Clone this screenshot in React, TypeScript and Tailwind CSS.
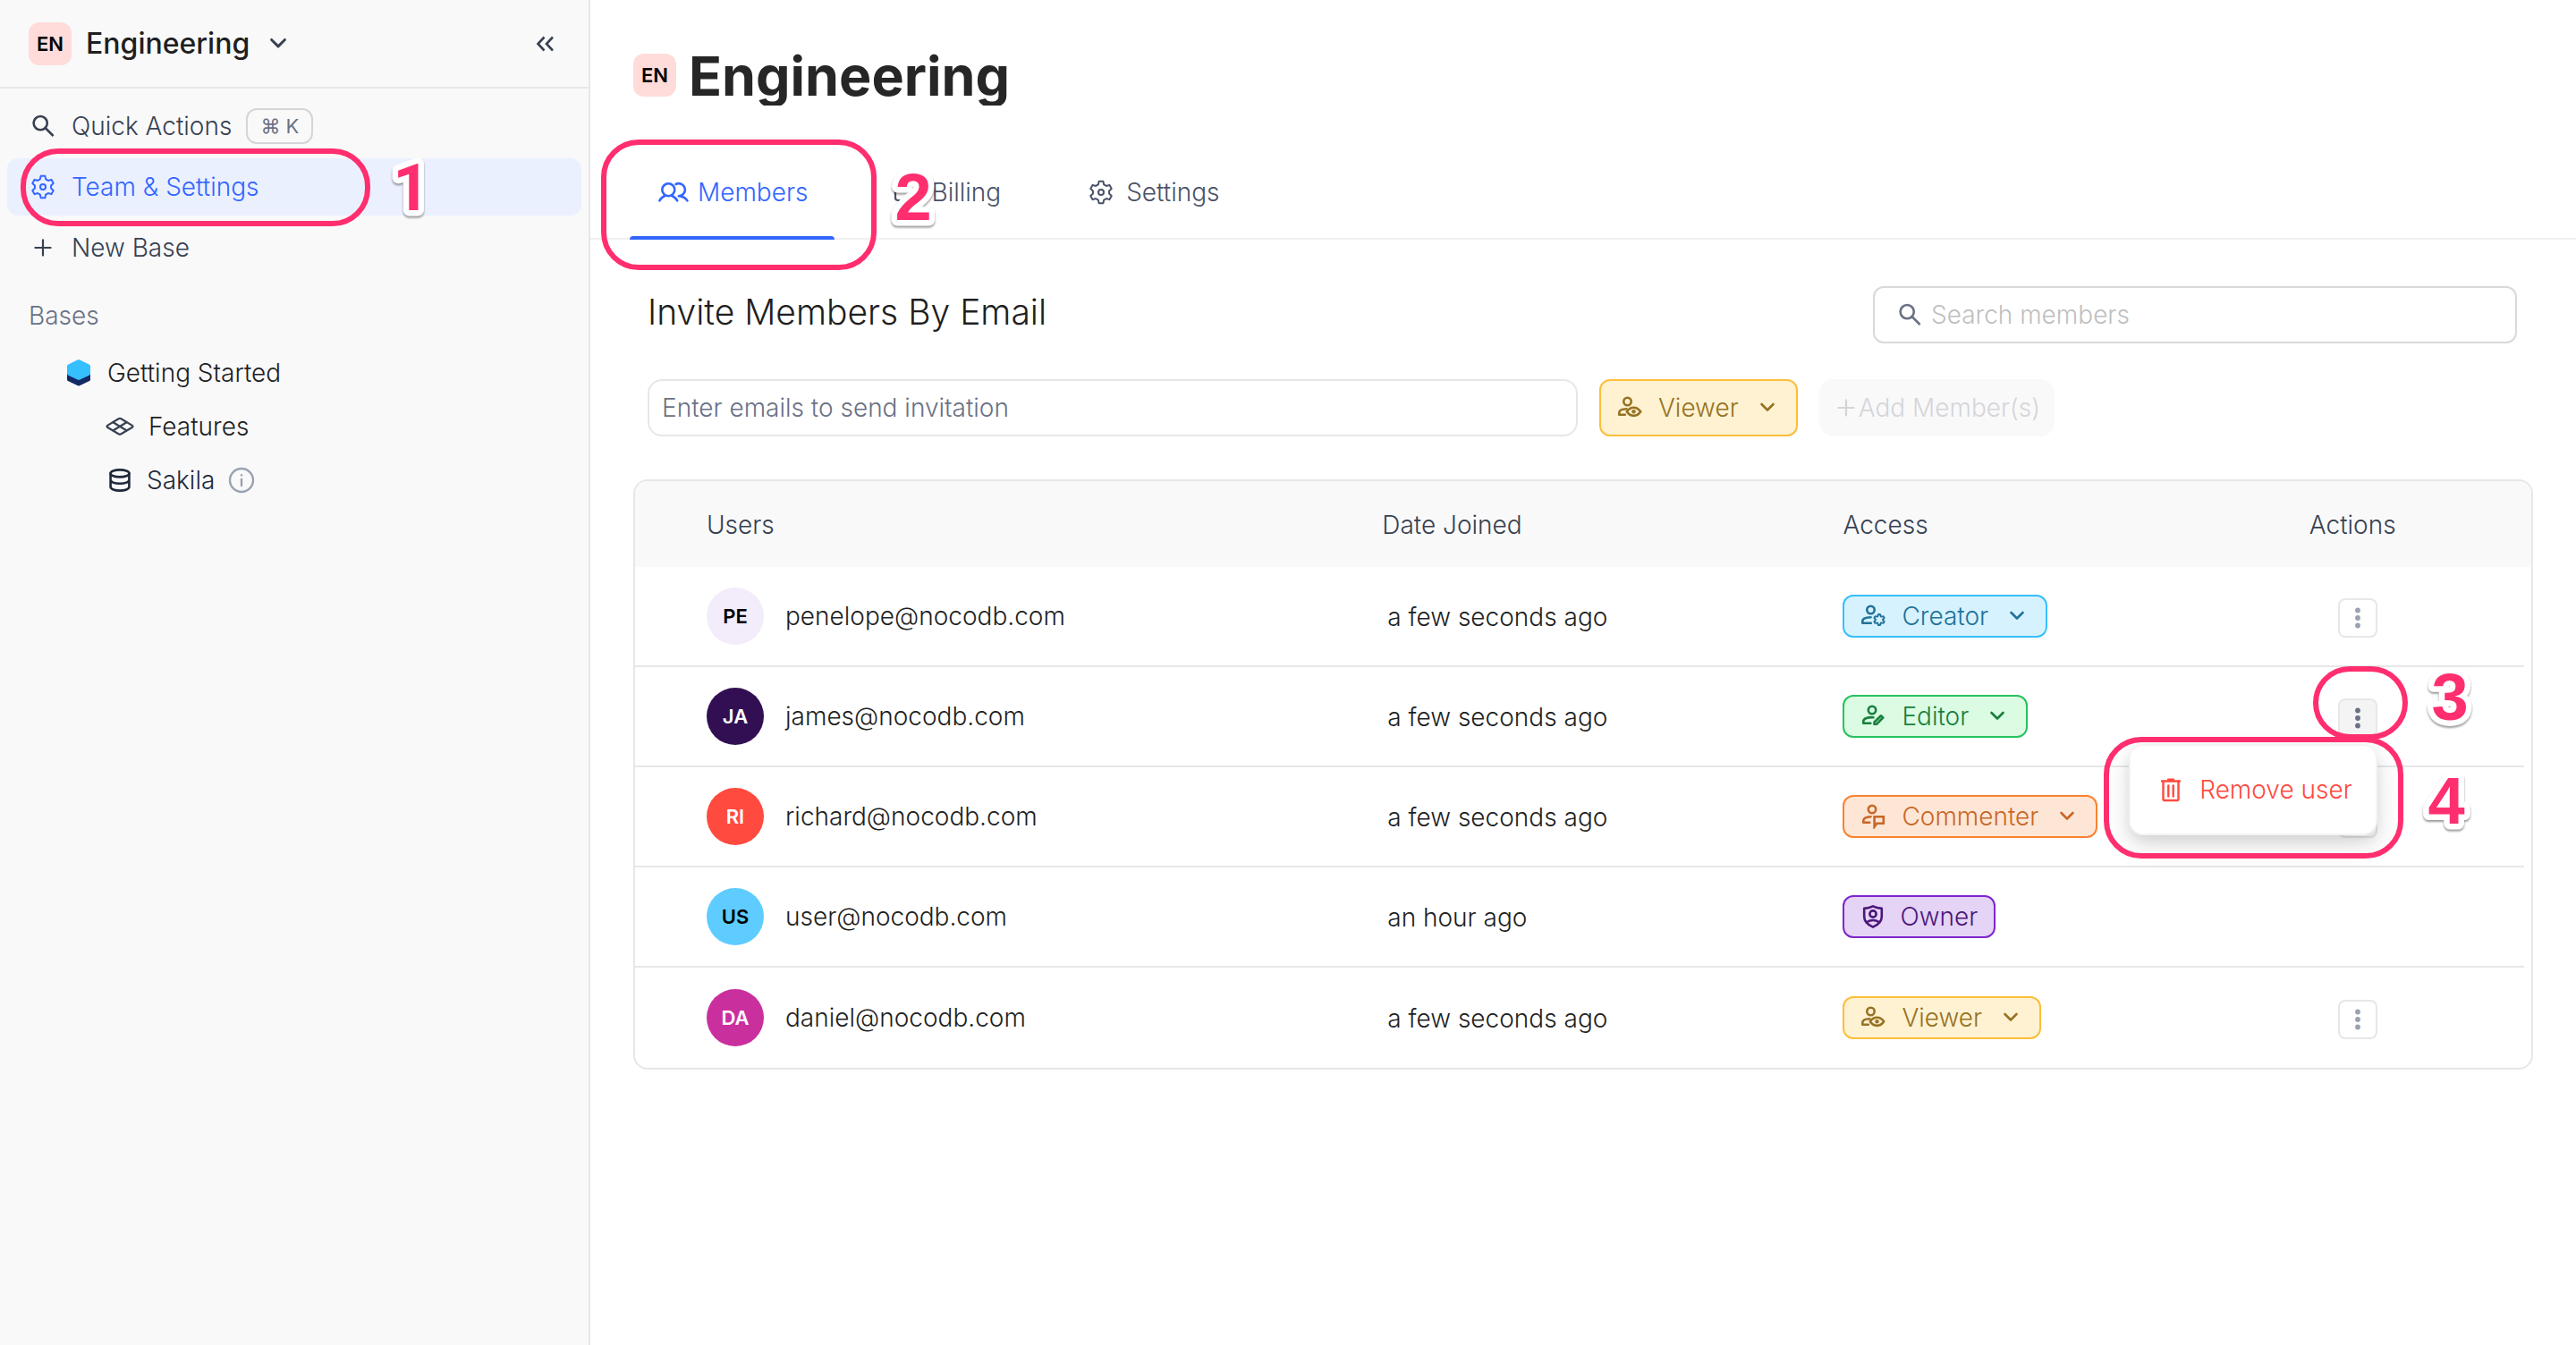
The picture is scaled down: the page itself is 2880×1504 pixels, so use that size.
import type { ReactNode } from 'react';

type IconProps = { className?: string };

const gearPath = (cx: number, cy: number, outer: number, inner: number, outerHalf: number, innerHalf: number) => {
  const points: string[] = [];
  for (let tooth = 0; tooth < 6; tooth++) {
    const mid = tooth * 60 - 90;
    const corners: [number, number][] = [
      [-innerHalf, inner],
      [-outerHalf, outer],
      [outerHalf, outer],
      [innerHalf, inner],
    ];
    for (const [offset, radius] of corners) {
      const rad = ((mid + offset) * Math.PI) / 180;
      points.push(`${(cx + radius * Math.cos(rad)).toFixed(2)} ${(cy + radius * Math.sin(rad)).toFixed(2)}`);
    }
  }
  return `M${points.join('L')}Z`;
};

function Svg({ className = 'size-7', box = '0 0 28 28', width = 2.6, children }: IconProps & { box?: string; width?: number; children: ReactNode }) {
  return (
    <svg aria-hidden="true" viewBox={box} className={`shrink-0 ${className}`} fill="none" stroke="currentColor" strokeWidth={width} strokeLinecap="round" strokeLinejoin="round">
      {children}
    </svg>
  );
}

const GearIcon = ({ className }: IconProps) => (
  <Svg className={className} width={2}>
    <path d={gearPath(14, 14, 12.4, 9.2, 11, 20)} />
    <circle cx="14" cy="14" r="3" />
  </Svg>
);

const SearchIcon = ({ className }: IconProps) => (
  <Svg className={className}>
    <circle cx="11.2" cy="10.6" r="7.6" />
    <path d="M16.6 16l9 9" strokeLinecap="butt" />
  </Svg>
);

const PlusIcon = ({ className }: IconProps) => (
  <Svg className={className} width={2.2}>
    <path d="M14 5.4v17.2M5.4 14h17.2" />
  </Svg>
);

const ChevronIcon = ({ className }: IconProps) => (
  <Svg className={className}>
    <path d="M7.5 10l6.5 6.5L20.5 10" />
  </Svg>
);

const CollapseIcon = () => (
  <Svg>
    <path d="M12.5 6.5L5.5 14l7 7.5M22 6.5L15 14l7 7.5" strokeLinecap="butt" strokeLinejoin="miter" />
  </Svg>
);

const PeopleIcon = () => (
  <Svg className="h-6 w-[34px]" box="0 0 34 24">
    <circle cx="11.3" cy="9.2" r="7" />
    <path d="M1.4 21.4c1.4-2.6 3.6-4.6 6.4-5.6M14.8 15.8c2.8 1 5 3 6.4 5.6" />
    <path d="M19.6 3a7 7 0 1 1 3.2 13.2c4 .2 7.4 1.9 9.6 5.2" />
  </Svg>
);

const CardIcon = () => (
  <Svg width={2.2}>
    <rect x="2" y="5" width="24" height="18" rx="3" />
    <path d="M2 11h24" />
  </Svg>
);

const BaseIcon = () => (
  <svg aria-hidden="true" viewBox="0 0 28 32" className="h-8 w-7 shrink-0">
    <path d="M1 13l13 4 13-4v10.5c0 .7-.3 1.200-1 1.600l-10.500 5c-1 .5-2 .5-3 0L2 25.100c-.7-.4-1-.9-1-1.600z" fill="#142966" />
    <path d="M1 8.500c0-.8.300-1.300 1-1.700L12.500 1.600c1-.5 2-.5 3 0L26 6.800c.7.4 1 .9 1 1.700v8.300c0 .700-.300 1.200-1 1.600l-10.500 5c-1 .5-2 .5-3 0L2 18.400c-.7-.4-1-.9-1-1.600z" fill="#36bfff" />
  </svg>
);

const GridIcon = () => (
  <Svg className="size-8" box="0 0 32 32" width={2.2}>
    <path d="M14.6 7.3L2.4 14.6c-1.2.7-1.2 1.7 0 2.4l12.2 7.3c1 .6 1.8.6 2.8 0L29.600 17c1.200-.7 1.200-1.700 0-2.400L17.400 7.300c-1-.6-1.800-.6-2.800 0z" />
    <path d="M8.5 11.2l14.800 9M23.500 11.200l-14.800 9" />
  </Svg>
);

const DatabaseIcon = () => (
  <Svg className="size-8" box="0 0 32 32" width={2.6}>
    <ellipse cx="16" cy="8.4" rx="10.4" ry="4" />
    <path d="M5.600 8.400v15.200c0 2.200 4.600 4 10.400 4s10.400-1.800 10.400-4V8.400M5.600 15.800c0 2.200 4.600 4 10.400 4s10.400-1.800 10.400-4" />
  </Svg>
);

const InfoIcon = () => (
  <Svg className="size-8 text-[#9aa2b1]" box="0 0 32 32" width={2.4}>
    <circle cx="16" cy="16" r="13" />
    <path d="M16 15v7M16 10.200v.2" />
  </Svg>
);

const TrashIcon = () => (
  <Svg box="0 0 28 28" width={2.4}>
    <path d="M4 4.500h20M11 2.600h6" />
    <path d="M5.500 5v19.500c0 1 .5 1.500 1.500 1.500h14c1 0 1.500-.5 1.500-1.500V5" />
    <path d="M11.300 9.500v12M16.700 9.500v12" />
  </Svg>
);

const DotsIcon = () => (
  <svg aria-hidden="true" viewBox="0 0 28 28" className="size-7" fill="currentColor">
    <circle cx="14" cy="5.500" r="2.900" />
    <circle cx="14" cy="14" r="2.900" />
    <circle cx="14" cy="22.500" r="2.900" />
  </svg>
);

type Role = 'Creator' | 'Editor' | 'Commenter' | 'Owner' | 'Viewer';

const roleIcons: Record<Role, ReactNode> = {
  Creator: (
    <Svg>
      <circle cx="11.5" cy="7" r="4.2" />
      <path d="M11.5 15.200C5.500 15.400 2.300 17 2.300 19.500v2.300h9.500" />
      <path d={gearPath(21, 18, 6, 4, 10, 28)} strokeWidth={2} />
    </Svg>
  ),
  Editor: (
    <Svg>
      <circle cx="13" cy="7" r="4.2" />
      <path d="M14.500 15.200C7 14.800 3.300 17 3.300 19.500v2.300h8" />
      <path d="M15.600 20.500l7.400-7.200 2.200 2.200-7.200 7.300h-2.600z" />
    </Svg>
  ),
  Commenter: (
    <Svg>
      <circle cx="13" cy="6" r="4.2" />
      <path d="M11.500 14.200C6 14.600 3.300 16.400 3.300 18.500v2.300h7" />
      <path d="M15.600 25.500V14.300h10.200v7.500h-7.500z" strokeLinejoin="miter" />
    </Svg>
  ),
  Owner: (
    <Svg>
      <path d="M14 2.400c3 1.700 6 2.300 9.800 2.500v9c0 5-3.800 9-9.800 11.700C8 22.900 4.200 18.900 4.200 13.900v-9C8 4.700 11 4.100 14 2.400z" />
      <circle cx="14" cy="11" r="3.6" />
      <path d="M7.500 20c2-1.400 4-2 6.500-2s4.500.6 6.500 2" />
    </Svg>
  ),
  Viewer: (
    <Svg>
      <circle cx="11.500" cy="7" r="4.200" />
      <path d="M10.500 15.200c-5 .2-8.200 1.800-8.200 4.100v2.500h6.500" />
      <path d="M10.800 18.300c2-3 4.400-4.600 7.700-4.600s5.700 1.600 7.700 4.600c-2 3-4.400 4.600-7.700 4.600s-5.700-1.600-7.700-4.600z" />
      <circle cx="18.500" cy="18.300" r="1" />
    </Svg>
  ),
};

const roleColours: Record<Role, string> = {
  Creator: 'border-[#36bfff] bg-[#d7f2ff] text-[#207399]',
  Editor: 'border-[#27c25f] bg-[#dcfbe3] text-[#17803d]',
  Commenter: 'border-[#fa8231] bg-[#fee6d6] text-[#c86827]',
  Owner: 'border-[#7d26cd] bg-[#e5d4f5] text-[#4b177b]',
  Viewer: 'border-[#fcbe3a] bg-[#fef2d2] text-[#977223]',
};

const assignable: Role[] = ['Creator', 'Editor', 'Commenter', 'Viewer'];

function RoleSelect({ role, label, className }: { role: Role; label: string; className: string }) {
  return (
    <label className={`relative inline-flex items-center rounded-xl border-2 pl-[18px] ${roleColours[role]} ${className}`}>
      {roleIcons[role]}
      <select aria-label={label} defaultValue={role} className="h-full cursor-pointer appearance-none bg-transparent pr-16 pl-[18px] outline-none [field-sizing:content]">
        {assignable.map((name) => (
          <option key={name}>{name}</option>
        ))}
      </select>
      <span className="pointer-events-none absolute right-[18px] flex">
        <ChevronIcon />
      </span>
    </label>
  );
}

function OwnerTag() {
  return (
    <span className={`inline-flex h-12 items-center gap-4 rounded-xl border-2 px-[18px] ${roleColours.Owner}`}>
      {roleIcons.Owner}
      Owner
    </span>
  );
}

function Highlight({ className }: { className: string }) {
  return <span aria-hidden="true" className={`pointer-events-none absolute z-20 rounded-[42px] border-6 border-[#ff2e6e] ${className}`} />;
}

function StepNumber({ value, className }: { value: number; className: string }) {
  return (
    <svg viewBox="0 0 60 76" className={`pointer-events-none absolute z-20 h-[76px] w-[60px] overflow-visible [filter:drop-shadow(0_2px_1px_rgb(0_0_0/0.4))] ${className}`}>
      <text
        x="30"
        y="60"
        textAnchor="middle"
        className={value === 1 ? "[font-family:Roboto,sans-serif] text-[72px] font-bold" : "[font-family:'Liberation_Sans',sans-serif] text-[74px] font-bold"}
        fill="#ff2e6e"
        stroke="#ffffff"
        strokeWidth="13"
        strokeLinejoin="round"
        paintOrder="stroke"
      >
        {value}
      </text>
    </svg>
  );
}

function WorkspaceBadge() {
  return <span className="flex size-12 shrink-0 items-center justify-center rounded-xl bg-[#ffdbd9] text-[22px] font-semibold text-black">EN</span>;
}

function Sidebar() {
  return (
    <aside className="flex w-[660px] shrink-0 flex-col border-r-2 border-[#e7e7e9] bg-[#f9f9fa] text-[#374151]">
      <header className="flex h-[99px] items-center border-b-2 border-[#e7e7e9] pr-[34px] pl-8">
        <button type="button" className="flex items-center gap-4 text-[32px] font-medium text-[#1f1f1f]">
          <WorkspaceBadge />
          Engineering
          <ChevronIcon className="size-8 text-[#374151]" />
        </button>
        <button type="button" aria-label="Collapse sidebar" className="ml-auto">
          <CollapseIcon />
        </button>
      </header>
      <nav className="flex flex-col pt-2.5">
        <div className="flex flex-col gap-1 px-2">
          <button type="button" className="flex h-16 items-center rounded-xl pl-[26px]">
            <SearchIcon className="mr-[18px] size-7" />
            Quick Actions
            <kbd className="ml-4 flex h-10 items-center rounded-xl border-2 border-[#d5d5d9] px-3.5 font-[Inter,'DejaVu_Sans',sans-serif] text-[22px] font-normal text-[#6a7184]">⌘ K</kbd>
          </button>
          <div className="relative">
            <a href="#team" className="flex h-16 items-center gap-[18px] rounded-xl bg-[#ebf0ff] pl-[26px] text-[#3366ff]">
              <GearIcon />
              Team &amp; Settings
            </a>
            <Highlight className="-top-[11px] left-[15px] h-[87px] w-[391px]" />
            <StepNumber value={1} className="-top-0.5 left-[422px]" />
          </div>
          <button type="button" className="flex h-16 items-center gap-[18px] rounded-xl pl-[26px]">
            <PlusIcon />
            New Base
          </button>
        </div>
        <h2 className="mt-7 px-8 leading-8 text-[#6a7184]">Bases</h2>
        <div className="mt-[18px] flex flex-col text-[#1f1f1f]">
          <a href="#getting-started" className="flex h-[60px] items-center gap-[18px] pl-[74px]">
            <BaseIcon />
            Getting Started
          </a>
          <a href="#features" className="flex h-[60px] items-center gap-4 pl-[118px]">
            <span className="text-[#374151]">
              <GridIcon />
            </span>
            Features
          </a>
          <a href="#sakila" className="flex h-[60px] items-center gap-3.5 pl-[118px] text-[#1f293a]">
            <DatabaseIcon />
            Sakila
            <InfoIcon />
          </a>
        </div>
      </nav>
    </aside>
  );
}

function Tabs() {
  return (
    <div role="tablist" className="mt-[46px] flex h-[104px] gap-[34px] border-b-2 border-[#f0f0f0] pl-11 text-[#4a5268]">
      <div className="relative flex">
        <button type="button" role="tab" aria-selected="true" className="flex items-center gap-2.5 pr-[30px] pl-8 text-[#3366ff]">
          <PeopleIcon />
          Members
        </button>
        <span className="absolute inset-x-0 -bottom-0.5 h-1 rounded-t bg-[#3366ff]" />
        <Highlight className="-top-2 -left-8 h-[146px] w-[308px]" />
      </div>
      <div className="relative flex">
        <button type="button" role="tab" aria-selected="false" className="flex items-center gap-3.5 px-8">
          <CardIcon />
          Billing
        </button>
        <StepNumber value={2} className="top-[22px] left-6" />
      </div>
      <button type="button" role="tab" aria-selected="false" className="flex items-center gap-3.5 px-8">
        <GearIcon />
        Settings
      </button>
    </div>
  );
}

type Member = { initials: string; avatar: string; email: string; joined: string; role: Role; menuOpen?: boolean };

const members: Member[] = [
  { initials: 'PE', avatar: 'bg-[#f3ecfa] text-black', email: 'penelope@nocodb.com', joined: 'a few seconds ago', role: 'Creator' },
  { initials: 'JA', avatar: 'bg-[#320f52] text-white', email: 'james@nocodb.com', joined: 'a few seconds ago', role: 'Editor', menuOpen: true },
  { initials: 'RI', avatar: 'bg-[#ff4a3f] text-white', email: 'richard@nocodb.com', joined: 'a few seconds ago', role: 'Commenter' },
  { initials: 'US', avatar: 'bg-[#5eccff] text-black', email: 'user@nocodb.com', joined: 'an hour ago', role: 'Owner' },
  { initials: 'DA', avatar: 'bg-[#ca2f9e] text-white', email: 'daniel@nocodb.com', joined: 'a few seconds ago', role: 'Viewer' },
];

function RowActions({ member }: { member: Member }) {
  if (member.role === 'Owner') return null;
  const tone = member.menuOpen ? 'bg-[#f4f4f5] text-[#6a7184]' : 'bg-white text-[#9aa2b1]';
  return (
    <div className="relative mx-auto size-11">
      <button type="button" aria-label={`Actions for ${member.email}`} className={`flex size-11 items-center justify-center rounded-lg border-2 border-[#e7e7e9] ${tone}`}>
        <DotsIcon />
      </button>
      {member.menuOpen && (
        <>
          <div role="menu" className="absolute top-[51px] right-0 z-10 flex h-[102px] w-[278px] rounded-2xl border-2 border-[#f4f4f5] bg-white shadow-[0_12px_32px_rgb(0_0_0/0.12),0_6px_12px_rgb(0_0_0/0.08)]">
            <button type="button" role="menuitem" className="flex flex-1 items-center gap-[18px] pl-[31px] whitespace-nowrap text-[#ff4a3f]">
              <TrashIcon />
              Remove user
            </button>
          </div>
          <Highlight className="-top-9 -left-7 h-[82px] w-[106px]" />
          <Highlight className="top-[43px] -right-[29px] h-[136px] w-[335px]" />
          <StepNumber value={3} className="-top-9 left-[95px]" />
          <StepNumber value={4} className="top-20 left-[91px]" />
        </>
      )}
    </div>
  );
}

function MembersTable() {
  return (
    <div className="mx-12 mt-12 overflow-hidden rounded-2xl border-2 border-[#e7e7e9]">
      <table className="w-full table-fixed border-separate border-spacing-0 text-left">
        <colgroup>
          <col className="w-[39.4%]" />
          <col className="w-[24.3%]" />
          <col className="w-[18.4%]" />
          <col />
          <col className="w-2" />
        </colgroup>
        <thead className="bg-[#f9f9fa] text-[#374151]">
          <tr className="h-24">
            <th scope="col" className="pt-0.5 pl-20 font-light">Users</th>
            <th scope="col" className="pt-0.5 font-light">Date Joined</th>
            <th scope="col" className="pt-0.5 font-light">Access</th>
            <th scope="col" className="pt-0.5 pr-3 text-center font-light">Actions</th>
            <td />
          </tr>
        </thead>
        <tbody className="text-[#1f1f1f] [&>tr:not(:last-child)>td:not(:last-child)]:border-b-2 [&>tr>td]:border-[#e7e7e9]">
          {members.map((member) => (
            <tr key={member.email} className="h-28">
              <td className="pl-20">
                <div className="flex items-center gap-6">
                  <span className={`flex size-16 items-center justify-center rounded-full text-[22px] font-semibold ${member.avatar}`}>{member.initials}</span>
                  {member.email}
                </div>
              </td>
              <td className="pt-0.5 pl-1.5">{member.joined}</td>
              <td>
                <div className="flex">
                  {member.role === 'Owner' ? <OwnerTag /> : <RoleSelect role={member.role} label={`Role of ${member.email}`} className="h-12" />}
                </div>
              </td>
              <td className="pt-1">
                <RowActions member={member} />
              </td>
              <td />
            </tr>
          ))}
        </tbody>
      </table>
    </div>
  );
}

export default function App() {
  return (
    <div className="flex min-h-screen bg-white font-[Inter,sans-serif] text-[28px] leading-9 font-light">
      <Sidebar />
      <main className="flex min-w-0 flex-1 flex-col">
        <div className="flex items-center gap-3.5 pt-[50px] pl-12">
          <WorkspaceBadge />
          <h1 className="h-[68px] overflow-hidden text-[61px] leading-[70px] font-bold text-[#262626]">Engineering</h1>
        </div>
        <Tabs />
        <div className="flex items-center justify-between pt-[52px] pr-[66px] pl-16">
          <h2 className="pb-1.5 text-[39px] leading-[48px] text-[#1f1f1f]">Invite Members By Email</h2>
          <label className="flex h-16 w-[720px] items-center gap-2.5 rounded-xl border-2 border-[#d9d9d9] pl-[25px] text-[#6a7184]">
            <SearchIcon />
            <input type="search" aria-label="Search members" placeholder="Search members" className="min-w-0 flex-1 bg-transparent text-[#1f1f1f] outline-none placeholder:text-[#bfbfbf]" />
          </label>
        </div>
        <form className="mt-10 flex gap-6 pl-16">
          <input type="text" aria-label="Emails" placeholder="Enter emails to send invitation" className="h-16 w-[1040px] rounded-2xl border-2 border-[#e7e7e9] px-3.5 outline-none placeholder:text-[#6a7184]" />
          <RoleSelect role="Viewer" label="Role for new members" className="h-16" />
          <button type="button" disabled className="flex h-16 items-center rounded-2xl bg-[#f9f9fa] px-4 text-[#d5d5d9]">
            <PlusIcon />
            Add Member(s)
          </button>
        </form>
        <MembersTable />
      </main>
    </div>
  );
}
